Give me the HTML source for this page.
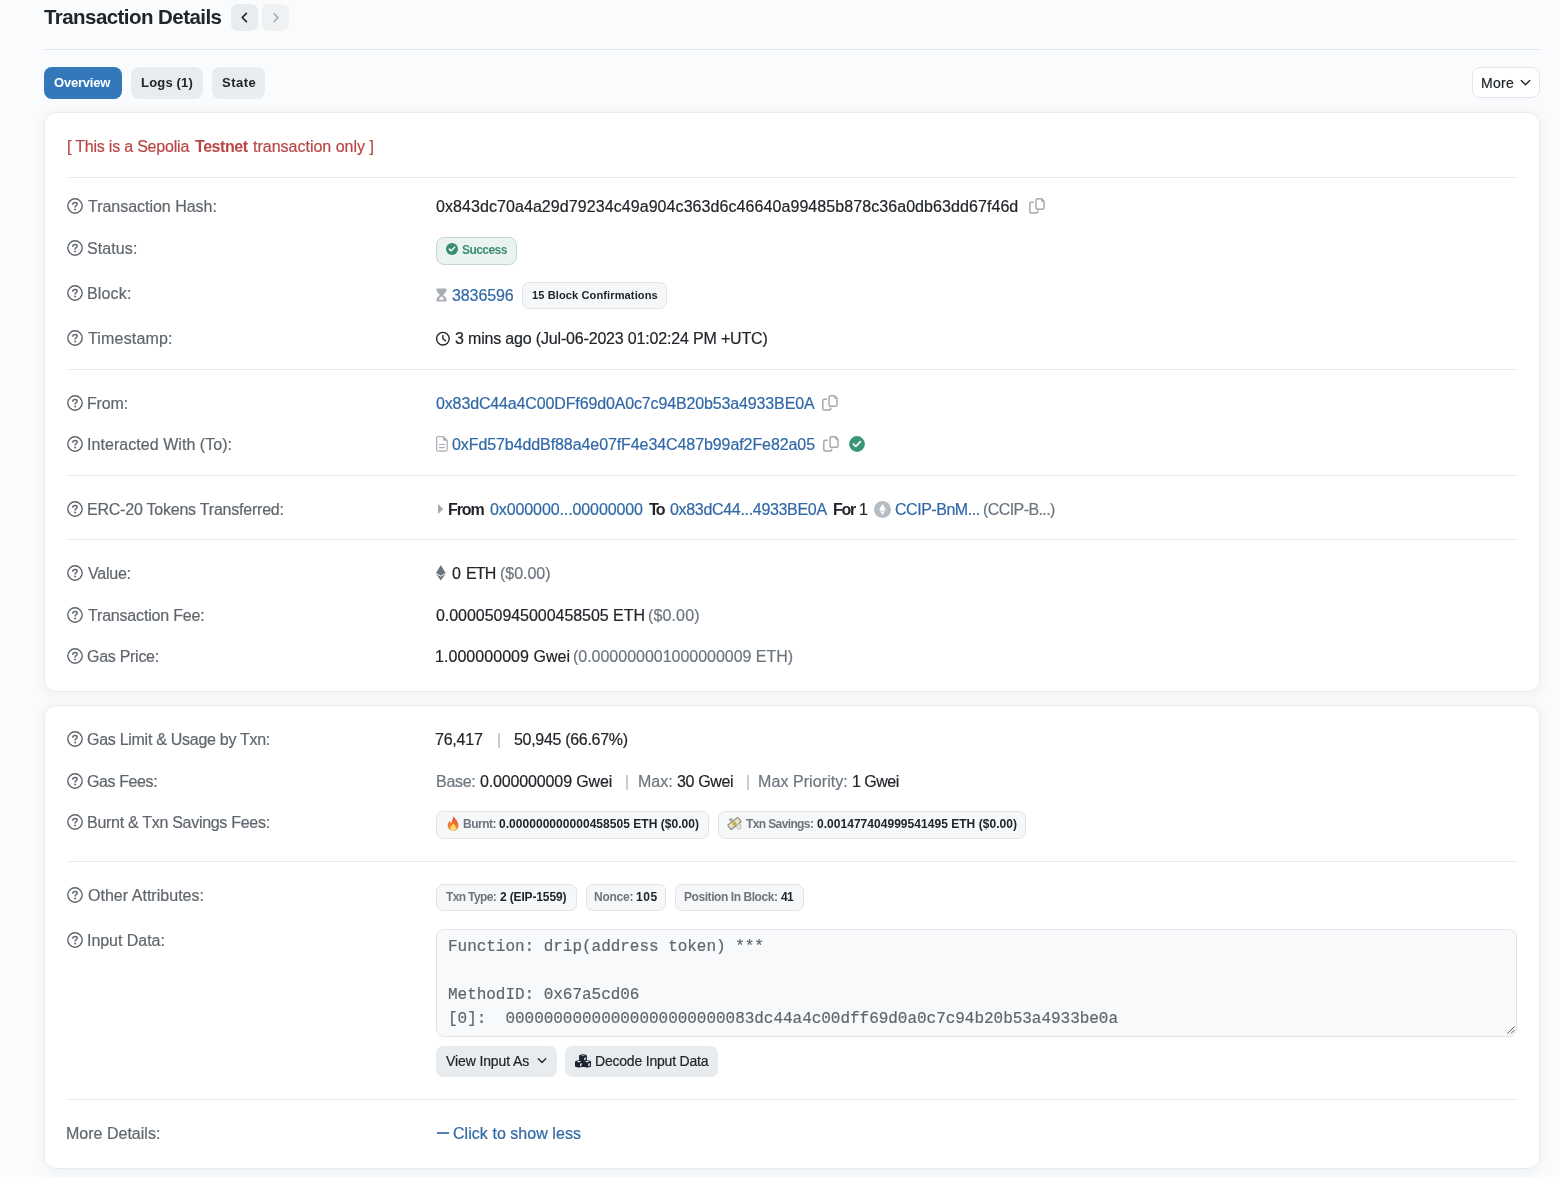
<!DOCTYPE html>
<html>
<head>
<meta charset="utf-8">
<style>
*{box-sizing:border-box;margin:0;padding:0}
html,body{width:1560px;height:1177px;overflow:hidden}
body{background:#fafbfc;font-family:"Liberation Sans",sans-serif;color:#212529;position:relative;font-size:16px}
.abs{position:absolute}
.lt,.val,.bt,.tabt,.title,#warn,#more,#ta,#btn_view,#btn_dec,#v_success,#v_conf{will-change:transform}
.lt,.val,#warn,#warn3,#more,#btn_view,#btn_dec,#ta{-webkit-text-stroke:0.2px currentColor}
b{-webkit-text-stroke:0}
.title{left:44px;top:3px;font-size:20.5px;font-weight:bold;line-height:28px;color:#212529;white-space:nowrap}
.navbtn{top:4px;width:27px;height:27px;border-radius:7px;background:#e9ecef}
.hsep{left:44px;top:49px;width:1496px;height:1px;background:#e4e7eb}
.tab{top:67px;height:32px;border-radius:8px;background:#e9ecef}
.tab.active{background:#3278bb}
.tabt{top:67px;font-size:13px;font-weight:bold;line-height:32px;color:#212529;white-space:nowrap}
.more{left:1472px;top:67px;width:68px;height:31px;border:1px solid #e2e5e9;border-radius:8px;background:#fff}
.card{left:44px;width:1495px;background:#fff;border:1px solid #e9ecef;border-radius:12px;box-shadow:0 2px 14px rgba(30,40,70,.055)}
.sep{left:67px;width:1451px;height:1px;background:#e9ecef}
.qi{left:67px}
.lt{left:87px;height:24px;line-height:24px;color:#5f666d;white-space:nowrap}
.val{left:436px;height:24px;line-height:24px;color:#212529;white-space:nowrap}
.link{color:#3068a6}
.muted{color:#6c757d}
.gbadge{background:#f6f7f8;border:1px solid #e2e4e7;border-radius:7px}
.bt{font-size:12px;font-weight:bold;white-space:nowrap;color:#212529}
.pipe{color:#b8bec4}
.bt.muted{color:#6c757d}
.warn{top:135px;line-height:24px;color:#b94544;white-space:nowrap;will-change:transform}
#title{letter-spacing:-0.556px;margin-left:0.00px}
#tab_logs{letter-spacing:0.186px;margin-left:-0.30px}
#tab_state{letter-spacing:0.500px;margin-left:-0.50px}
#more{letter-spacing:0.267px;margin-left:0.20px}
#l_hash{letter-spacing:-0.025px;margin-left:1.20px}
#l_status{letter-spacing:0.100px;margin-left:0.20px}
#l_block{letter-spacing:0.160px;margin-left:0.20px}
#l_ts{letter-spacing:0.167px;margin-left:1.20px}
#l_from{letter-spacing:-0.150px;margin-left:0.20px}
#l_to{letter-spacing:0.050px;margin-left:0.20px}
#l_erc{letter-spacing:-0.220px;margin-left:0.20px}
#l_value{letter-spacing:-0.240px;margin-left:1.20px}
#l_fee{letter-spacing:-0.187px;margin-left:1.20px}
#l_gp{letter-spacing:-0.278px;margin-left:0.20px}
#l_gl{letter-spacing:-0.279px;margin-left:0.20px}
#l_gf{letter-spacing:-0.400px;margin-left:0.20px}
#l_burnt{letter-spacing:-0.288px;margin-left:0.20px}
#l_other{letter-spacing:0.025px;margin-left:1.20px}
#l_input{letter-spacing:-0.040px;margin-left:0.20px}
#l_more{letter-spacing:0.008px;margin-left:-0.60px}
#v_hash{letter-spacing:0.074px;margin-left:0.00px}
#v_success{letter-spacing:-0.567px;margin-left:0.20px}
#v_block{letter-spacing:-0.100px;margin-left:0.60px}
#v_conf{letter-spacing:0.086px;margin-left:-1.00px}
#v_ts{letter-spacing:-0.173px;margin-left:1.00px}
#v_from{letter-spacing:-0.139px;margin-left:0.00px}
#v_to{letter-spacing:-0.085px;margin-left:0.40px}
#e_from{letter-spacing:-1.067px;margin-left:-0.30px}
#e_a1{letter-spacing:-0.100px;margin-left:0.50px}
#e_to{letter-spacing:-1.800px;margin-left:0.50px}
#e_a2{letter-spacing:-0.317px;margin-left:0.00px}
#e_for{letter-spacing:-1.325px;margin-left:-0.40px}
#e_tok{letter-spacing:-0.470px;margin-left:-1.00px}
#e_sym{letter-spacing:-0.580px;margin-left:-0.50px}
#v_val{letter-spacing:-0.850px;margin-left:-0.10px}
#v_val2{letter-spacing:-0.033px;margin-left:0.20px}
#v_fee{letter-spacing:-0.043px;margin-left:0.00px}
#v_fee2{letter-spacing:0.133px;margin-left:-1.20px}
#v_gp{letter-spacing:0.053px;margin-left:-1.00px}
#v_gp2{letter-spacing:-0.020px;margin-left:0.20px}
#v_gl1{letter-spacing:-0.220px;margin-left:-0.70px}
#v_gl2{letter-spacing:-0.307px;margin-left:-0.50px}
#ta{letter-spacing:-0.030px;margin-left:-0.20px}
#btn_view{letter-spacing:-0.117px;margin-left:0.00px}
#btn_dec{letter-spacing:-0.206px;margin-left:-0.40px}
#v_less{letter-spacing:0.047px;margin-left:-0.60px}
#e_one{letter-spacing:0.000px;margin-left:-1.60px}
#tab_ov{letter-spacing:-0.214px;margin-left:0.30px}
#v_val0{letter-spacing:0.000px;margin-left:-0.58px}
#b_burnt_k{letter-spacing:-0.480px;margin-left:-0.60px}
#b_burnt{letter-spacing:0.039px;margin-left:0.40px}
#b_save_k{letter-spacing:-0.618px;margin-left:0.00px}
#b_save{letter-spacing:0.035px;margin-left:0.80px}
#b_type_k{letter-spacing:-0.638px;margin-left:0.20px}
#b_type{letter-spacing:-0.145px;margin-left:0.40px}
#b_nonce_k{letter-spacing:-0.240px;margin-left:-0.80px}
#b_nonce{letter-spacing:0.600px;margin-left:-1.00px}
#b_pos_k{letter-spacing:-0.435px;margin-left:-0.90px}
#b_pos{letter-spacing:-0.700px;margin-left:-0.40px}
#v_gf1k{letter-spacing:-0.275px;margin-left:-0.10px}
#v_gf1{letter-spacing:-0.140px;margin-left:0.00px}
#v_gf2k{letter-spacing:-0.033px;margin-left:-0.50px}
#v_gf2{letter-spacing:-0.367px;margin-left:0.30px}
#v_gf3k{letter-spacing:0.075px;margin-left:-0.60px}
#v_gf3{letter-spacing:-0.500px;margin-left:-1.00px}
#warn{letter-spacing:-0.206px;margin-left:-0.50px}
#warn2{letter-spacing:-0.433px;margin-left:-0.40px}
#warn3{letter-spacing:0.000px;margin-left:0.90px}
</style>
</head>
<body>
<div class="abs title" id="title">Transaction Details</div>
<div class="abs navbtn" style="left:231px"></div>
<div class="abs navbtn" style="left:262px;background:#eff1f3"></div>
<svg class="abs" style="left:239px;top:12px" width="10" height="12" viewBox="0 0 10 12"><path d="M7.4 1.3L3.2 5.5L7.4 9.7" fill="none" stroke="#212529" stroke-width="1.7" stroke-linecap="round" stroke-linejoin="round"/></svg>
<svg class="abs" style="left:271px;top:12px" width="10" height="12" viewBox="0 0 10 12"><path d="M3 1.8L7 5.8L3 9.8" fill="none" stroke="#9aa0a6" stroke-width="1.3" stroke-linecap="round" stroke-linejoin="round"/></svg>
<div class="abs hsep"></div>
<div class="abs tab active" style="left:44px;width:78px"></div>
<div class="abs tab" style="left:131px;width:72px"></div>
<div class="abs tab" style="left:212px;width:53px"></div>
<div class="abs tabt" id="tab_ov" style="left:54px;color:#fff">Overview</div>
<div class="abs tabt" id="tab_logs" style="left:141px">Logs (1)</div>
<div class="abs tabt" id="tab_state" style="left:222px">State</div>
<div class="abs more"></div>
<div class="abs" id="more" style="left:1481px;top:68px;line-height:31px;font-size:14px">More</div>
<svg class="abs" style="left:1520px;top:79px" width="11" height="8" viewBox="0 0 11 8"><path d="M1.3 1.5L5.5 5.7L9.7 1.5" fill="none" stroke="#212529" stroke-width="1.4" stroke-linecap="round" stroke-linejoin="round"/></svg>
<div class="abs card" style="top:112px;height:580px;width:1496px"></div>
<div class="abs card" style="top:705px;height:464px;width:1496px"></div>
<div class="abs warn" id="warn" style="left:67px">[ This is a Sepolia</div>
<div class="abs warn" id="warn2" style="left:195px;font-weight:bold">Testnet</div>
<div class="abs warn" id="warn3" style="left:252px">transaction only ]</div>
<div class="abs sep" style="top:177px"></div>
<div class="abs sep" style="top:369px"></div>
<div class="abs sep" style="top:475px"></div>
<div class="abs sep" style="top:539px"></div>
<div class="abs sep" style="top:861px"></div>
<div class="abs sep" style="top:1099px"></div>
<svg class="abs qi" style="top:198px" width="16" height="16" viewBox="0 0 16 16"><circle cx="8" cy="8" r="7.2" fill="none" stroke="#5f666d" stroke-width="1.4"/><path d="M5.8 6.3C5.8 5.1 6.8 4.5 8 4.5C9.2 4.5 10.2 5.2 10.2 6.2C10.2 7.6 8.1 7.7 8.1 9.1" fill="none" stroke="#5f666d" stroke-width="1.4" stroke-linecap="round"/><circle cx="8.1" cy="11.5" r="0.95" fill="#5f666d"/></svg>
<div class="abs lt" id="l_hash" style="top:195px">Transaction Hash:</div>
<svg class="abs qi" style="top:240px" width="16" height="16" viewBox="0 0 16 16"><circle cx="8" cy="8" r="7.2" fill="none" stroke="#5f666d" stroke-width="1.4"/><path d="M5.8 6.3C5.8 5.1 6.8 4.5 8 4.5C9.2 4.5 10.2 5.2 10.2 6.2C10.2 7.6 8.1 7.7 8.1 9.1" fill="none" stroke="#5f666d" stroke-width="1.4" stroke-linecap="round"/><circle cx="8.1" cy="11.5" r="0.95" fill="#5f666d"/></svg>
<div class="abs lt" id="l_status" style="top:237px">Status:</div>
<svg class="abs qi" style="top:285px" width="16" height="16" viewBox="0 0 16 16"><circle cx="8" cy="8" r="7.2" fill="none" stroke="#5f666d" stroke-width="1.4"/><path d="M5.8 6.3C5.8 5.1 6.8 4.5 8 4.5C9.2 4.5 10.2 5.2 10.2 6.2C10.2 7.6 8.1 7.7 8.1 9.1" fill="none" stroke="#5f666d" stroke-width="1.4" stroke-linecap="round"/><circle cx="8.1" cy="11.5" r="0.95" fill="#5f666d"/></svg>
<div class="abs lt" id="l_block" style="top:282px">Block:</div>
<svg class="abs qi" style="top:330px" width="16" height="16" viewBox="0 0 16 16"><circle cx="8" cy="8" r="7.2" fill="none" stroke="#5f666d" stroke-width="1.4"/><path d="M5.8 6.3C5.8 5.1 6.8 4.5 8 4.5C9.2 4.5 10.2 5.2 10.2 6.2C10.2 7.6 8.1 7.7 8.1 9.1" fill="none" stroke="#5f666d" stroke-width="1.4" stroke-linecap="round"/><circle cx="8.1" cy="11.5" r="0.95" fill="#5f666d"/></svg>
<div class="abs lt" id="l_ts" style="top:327px">Timestamp:</div>
<svg class="abs qi" style="top:395px" width="16" height="16" viewBox="0 0 16 16"><circle cx="8" cy="8" r="7.2" fill="none" stroke="#5f666d" stroke-width="1.4"/><path d="M5.8 6.3C5.8 5.1 6.8 4.5 8 4.5C9.2 4.5 10.2 5.2 10.2 6.2C10.2 7.6 8.1 7.7 8.1 9.1" fill="none" stroke="#5f666d" stroke-width="1.4" stroke-linecap="round"/><circle cx="8.1" cy="11.5" r="0.95" fill="#5f666d"/></svg>
<div class="abs lt" id="l_from" style="top:392px">From:</div>
<svg class="abs qi" style="top:436px" width="16" height="16" viewBox="0 0 16 16"><circle cx="8" cy="8" r="7.2" fill="none" stroke="#5f666d" stroke-width="1.4"/><path d="M5.8 6.3C5.8 5.1 6.8 4.5 8 4.5C9.2 4.5 10.2 5.2 10.2 6.2C10.2 7.6 8.1 7.7 8.1 9.1" fill="none" stroke="#5f666d" stroke-width="1.4" stroke-linecap="round"/><circle cx="8.1" cy="11.5" r="0.95" fill="#5f666d"/></svg>
<div class="abs lt" id="l_to" style="top:433px">Interacted With (To):</div>
<svg class="abs qi" style="top:501px" width="16" height="16" viewBox="0 0 16 16"><circle cx="8" cy="8" r="7.2" fill="none" stroke="#5f666d" stroke-width="1.4"/><path d="M5.8 6.3C5.8 5.1 6.8 4.5 8 4.5C9.2 4.5 10.2 5.2 10.2 6.2C10.2 7.6 8.1 7.7 8.1 9.1" fill="none" stroke="#5f666d" stroke-width="1.4" stroke-linecap="round"/><circle cx="8.1" cy="11.5" r="0.95" fill="#5f666d"/></svg>
<div class="abs lt" id="l_erc" style="top:498px">ERC-20 Tokens Transferred:</div>
<svg class="abs qi" style="top:565px" width="16" height="16" viewBox="0 0 16 16"><circle cx="8" cy="8" r="7.2" fill="none" stroke="#5f666d" stroke-width="1.4"/><path d="M5.8 6.3C5.8 5.1 6.8 4.5 8 4.5C9.2 4.5 10.2 5.2 10.2 6.2C10.2 7.6 8.1 7.7 8.1 9.1" fill="none" stroke="#5f666d" stroke-width="1.4" stroke-linecap="round"/><circle cx="8.1" cy="11.5" r="0.95" fill="#5f666d"/></svg>
<div class="abs lt" id="l_value" style="top:562px">Value:</div>
<svg class="abs qi" style="top:607px" width="16" height="16" viewBox="0 0 16 16"><circle cx="8" cy="8" r="7.2" fill="none" stroke="#5f666d" stroke-width="1.4"/><path d="M5.8 6.3C5.8 5.1 6.8 4.5 8 4.5C9.2 4.5 10.2 5.2 10.2 6.2C10.2 7.6 8.1 7.7 8.1 9.1" fill="none" stroke="#5f666d" stroke-width="1.4" stroke-linecap="round"/><circle cx="8.1" cy="11.5" r="0.95" fill="#5f666d"/></svg>
<div class="abs lt" id="l_fee" style="top:604px">Transaction Fee:</div>
<svg class="abs qi" style="top:648px" width="16" height="16" viewBox="0 0 16 16"><circle cx="8" cy="8" r="7.2" fill="none" stroke="#5f666d" stroke-width="1.4"/><path d="M5.8 6.3C5.8 5.1 6.8 4.5 8 4.5C9.2 4.5 10.2 5.2 10.2 6.2C10.2 7.6 8.1 7.7 8.1 9.1" fill="none" stroke="#5f666d" stroke-width="1.4" stroke-linecap="round"/><circle cx="8.1" cy="11.5" r="0.95" fill="#5f666d"/></svg>
<div class="abs lt" id="l_gp" style="top:645px">Gas Price:</div>
<svg class="abs qi" style="top:731px" width="16" height="16" viewBox="0 0 16 16"><circle cx="8" cy="8" r="7.2" fill="none" stroke="#5f666d" stroke-width="1.4"/><path d="M5.8 6.3C5.8 5.1 6.8 4.5 8 4.5C9.2 4.5 10.2 5.2 10.2 6.2C10.2 7.6 8.1 7.7 8.1 9.1" fill="none" stroke="#5f666d" stroke-width="1.4" stroke-linecap="round"/><circle cx="8.1" cy="11.5" r="0.95" fill="#5f666d"/></svg>
<div class="abs lt" id="l_gl" style="top:728px">Gas Limit &amp; Usage by Txn:</div>
<svg class="abs qi" style="top:773px" width="16" height="16" viewBox="0 0 16 16"><circle cx="8" cy="8" r="7.2" fill="none" stroke="#5f666d" stroke-width="1.4"/><path d="M5.8 6.3C5.8 5.1 6.8 4.5 8 4.5C9.2 4.5 10.2 5.2 10.2 6.2C10.2 7.6 8.1 7.7 8.1 9.1" fill="none" stroke="#5f666d" stroke-width="1.4" stroke-linecap="round"/><circle cx="8.1" cy="11.5" r="0.95" fill="#5f666d"/></svg>
<div class="abs lt" id="l_gf" style="top:770px">Gas Fees:</div>
<svg class="abs qi" style="top:814px" width="16" height="16" viewBox="0 0 16 16"><circle cx="8" cy="8" r="7.2" fill="none" stroke="#5f666d" stroke-width="1.4"/><path d="M5.8 6.3C5.8 5.1 6.8 4.5 8 4.5C9.2 4.5 10.2 5.2 10.2 6.2C10.2 7.6 8.1 7.7 8.1 9.1" fill="none" stroke="#5f666d" stroke-width="1.4" stroke-linecap="round"/><circle cx="8.1" cy="11.5" r="0.95" fill="#5f666d"/></svg>
<div class="abs lt" id="l_burnt" style="top:811px">Burnt &amp; Txn Savings Fees:</div>
<svg class="abs qi" style="top:887px" width="16" height="16" viewBox="0 0 16 16"><circle cx="8" cy="8" r="7.2" fill="none" stroke="#5f666d" stroke-width="1.4"/><path d="M5.8 6.3C5.8 5.1 6.8 4.5 8 4.5C9.2 4.5 10.2 5.2 10.2 6.2C10.2 7.6 8.1 7.7 8.1 9.1" fill="none" stroke="#5f666d" stroke-width="1.4" stroke-linecap="round"/><circle cx="8.1" cy="11.5" r="0.95" fill="#5f666d"/></svg>
<div class="abs lt" id="l_other" style="top:884px">Other Attributes:</div>
<svg class="abs qi" style="top:932px" width="16" height="16" viewBox="0 0 16 16"><circle cx="8" cy="8" r="7.2" fill="none" stroke="#5f666d" stroke-width="1.4"/><path d="M5.8 6.3C5.8 5.1 6.8 4.5 8 4.5C9.2 4.5 10.2 5.2 10.2 6.2C10.2 7.6 8.1 7.7 8.1 9.1" fill="none" stroke="#5f666d" stroke-width="1.4" stroke-linecap="round"/><circle cx="8.1" cy="11.5" r="0.95" fill="#5f666d"/></svg>
<div class="abs lt" id="l_input" style="top:929px">Input Data:</div>
<div class="abs lt" id="l_more" style="top:1122px;left:67px">More Details:</div>
<div class="abs val" id="v_hash" style="top:195px">0x843dc70a4a29d79234c49a904c363d6c46640a99485b878c36a0db63dd67f46d</div>
<svg class="abs" style="left:1029px;top:198px" width="16" height="16" viewBox="0 0 16 16"><path d="M4.9 4.3H2.3Q0.8 4.3 0.8 5.8V13.5Q0.8 15 2.3 15H7.3Q8.8 15 8.8 13.5V12.4" fill="none" stroke="#a3a8ae" stroke-width="1.45"/><path d="M8.5 0.8H12.5L15 3.3V9.7Q15 11.2 13.5 11.2H8.5Q7 11.2 7 9.7V2.3Q7 0.8 8.5 0.8Z" fill="none" stroke="#a3a8ae" stroke-width="1.45" stroke-linejoin="round"/><path d="M12.1 0.8L15 3.7H13.1Q12.1 3.7 12.1 2.7Z" fill="#a3a8ae"/></svg>
<div class="abs" style="left:436px;top:237px;width:81px;height:28px;border:1px solid #c5d6d0;background:#ebf3f0;border-radius:8px"></div>
<svg class="abs" style="left:446px;top:243px" width="12" height="12" viewBox="0 0 12 12"><circle cx="6" cy="6" r="6" fill="#3a8d6e"/><path d="M3.3 6.1L5.1 7.8L8.7 4.3" fill="none" stroke="#fff" stroke-width="1.5" stroke-linecap="round" stroke-linejoin="round"/></svg>
<div class="abs" id="v_success" style="left:462px;top:236px;line-height:28px;font-size:12px;font-weight:bold;color:#3a8d6e">Success</div>
<svg class="abs" style="left:436px;top:288px" width="11" height="14" viewBox="0 0 11 14"><path d="M0.5 0.5H10.5V2.2Q10.5 4.3 7.2 7Q10.5 9.7 10.5 11.8V13.5H0.5V11.8Q0.5 9.7 3.8 7Q0.5 4.3 0.5 2.2Z" fill="#a9aeb4"/><path d="M3 11.8Q3 10 5.5 8.2Q8 10 8 11.8Z" fill="#fff"/><path d="M2.2 2.2H8.8Q8.3 3.6 5.5 5.8Q2.7 3.6 2.2 2.2Z" fill="#a9aeb4"/></svg>
<div class="abs val link" id="v_block" style="top:284px;left:451px">3836596</div>
<div class="abs gbadge" style="left:522px;top:282px;width:145px;height:27px"></div>
<div class="abs bt" id="v_conf" style="left:533px;top:282px;line-height:27px;font-size:11.1px">15 Block Confirmations</div>
<svg class="abs" style="left:435px;top:331px" width="16" height="16" viewBox="0 0 16 16"><circle cx="7.9" cy="7.7" r="6.3" fill="none" stroke="#212529" stroke-width="1.35"/><path d="M7.9 4.4V7.8L10.6 9.8" fill="none" stroke="#212529" stroke-width="1.35" stroke-linecap="round" stroke-linejoin="round"/></svg>
<div class="abs val" id="v_ts" style="top:327px;left:454px">3 mins ago (Jul-06-2023 01:02:24 PM +UTC)</div>
<div class="abs val link" id="v_from" style="top:392px">0x83dC44a4C00DFf69d0A0c7c94B20b53a4933BE0A</div>
<svg class="abs" style="left:822px;top:395px" width="16" height="16" viewBox="0 0 16 16"><path d="M4.9 4.3H2.3Q0.8 4.3 0.8 5.8V13.5Q0.8 15 2.3 15H7.3Q8.8 15 8.8 13.5V12.4" fill="none" stroke="#a3a8ae" stroke-width="1.45"/><path d="M8.5 0.8H12.5L15 3.3V9.7Q15 11.2 13.5 11.2H8.5Q7 11.2 7 9.7V2.3Q7 0.8 8.5 0.8Z" fill="none" stroke="#a3a8ae" stroke-width="1.45" stroke-linejoin="round"/><path d="M12.1 0.8L15 3.7H13.1Q12.1 3.7 12.1 2.7Z" fill="#a3a8ae"/></svg>
<svg class="abs" style="left:436px;top:436px" width="12" height="16" viewBox="0 0 12 16"><path d="M2.2 0.6H7.3L11.2 4.5V13.6Q11.2 15.2 9.6 15.2H2.2Q0.6 15.2 0.6 13.6V2.2Q0.6 0.6 2.2 0.6Z" fill="none" stroke="#a9aeb4" stroke-width="1.2"/><path d="M7 0.6L11.2 4.8H8.2Q7 4.8 7 3.6Z" fill="#a9aeb4"/><path d="M3.3 8.5H8.6M3.3 11.6H8.6" stroke="#a9aeb4" stroke-width="1.2" stroke-linecap="round"/></svg>
<div class="abs val link" id="v_to" style="top:433px;left:452px">0xFd57b4ddBf88a4e07fF4e34C487b99af2Fe82a05</div>
<svg class="abs" style="left:823px;top:436px" width="16" height="16" viewBox="0 0 16 16"><path d="M4.9 4.3H2.3Q0.8 4.3 0.8 5.8V13.5Q0.8 15 2.3 15H7.3Q8.8 15 8.8 13.5V12.4" fill="none" stroke="#a3a8ae" stroke-width="1.45"/><path d="M8.5 0.8H12.5L15 3.3V9.7Q15 11.2 13.5 11.2H8.5Q7 11.2 7 9.7V2.3Q7 0.8 8.5 0.8Z" fill="none" stroke="#a3a8ae" stroke-width="1.45" stroke-linejoin="round"/><path d="M12.1 0.8L15 3.7H13.1Q12.1 3.7 12.1 2.7Z" fill="#a3a8ae"/></svg>
<svg class="abs" style="left:849px;top:436px" width="16" height="16" viewBox="0 0 16 16"><circle cx="8" cy="8" r="7.9" fill="#3a9677"/><path d="M4.4 8.1L6.8 10.3L11.4 5.7" fill="none" stroke="#fff" stroke-width="1.7" stroke-linecap="round" stroke-linejoin="round"/></svg>
<svg class="abs" style="left:438px;top:504px" width="6" height="10" viewBox="0 0 6 10"><path d="M0 0L5.2 5L0 10Z" fill="#a3a9b0"/></svg>
<div class="abs val " id="e_from" style="top:498px;left:448px"><b>From</b></div>
<div class="abs val link" id="e_a1" style="top:498px;left:489px">0x000000...00000000</div>
<div class="abs val " id="e_to" style="top:498px;left:648px"><b>To</b></div>
<div class="abs val link" id="e_a2" style="top:498px;left:670px">0x83dC44...4933BE0A</div>
<div class="abs val " id="e_for" style="top:498px;left:833px"><b>For</b></div>
<div class="abs val " id="e_one" style="top:498px;left:861px">1</div>
<div class="abs val link" id="e_tok" style="top:498px;left:896px">CCIP-BnM...</div>
<div class="abs val muted" id="e_sym" style="top:498px;left:983px">(CCIP-B...)</div>
<svg class="abs" style="left:874px;top:501px" width="17" height="17" viewBox="0 0 16 16"><circle cx="8" cy="8" r="8" fill="#b6bcc3"/><path d="M8 2.6L11.1 8L8 9.9L4.9 8Z" fill="#fff"/><path d="M8 10.6L11.1 8.7L8 13.2L4.9 8.7Z" fill="#fff"/></svg>
<svg class="abs" style="left:436px;top:565px" width="10" height="16" viewBox="0 0 10 16"><path d="M4.8 0L9.6 8L4.8 10.8L0 8Z" fill="#6c757d"/><path d="M4.8 11.8L9.6 9L4.8 15.6L0 9Z" fill="#6c757d"/></svg>
<div class="abs val" id="v_val0" style="top:562px;left:453px">0</div>
<div class="abs val" id="v_val" style="top:562px;left:466px">ETH</div>
<div class="abs val muted" id="v_val2" style="top:562px;left:500px">($0.00)</div>
<div class="abs val" id="v_fee" style="top:604px">0.000050945000458505 ETH</div>
<div class="abs val muted" id="v_fee2" style="top:604px;left:649px">($0.00)</div>
<div class="abs val" id="v_gp" style="top:645px">1.000000009 Gwei</div>
<div class="abs val muted" id="v_gp2" style="top:645px;left:573px">(0.000000001000000009 ETH)</div>
<div class="abs val" id="v_gl1" style="top:728px">76,417</div>
<div class="abs val pipe" style="top:728px;left:497px">|</div>
<div class="abs val" id="v_gl2" style="top:728px;left:514px">50,945 (66.67%)</div>
<div class="abs val muted" id="v_gf1k" style="top:770px">Base:</div>
<div class="abs val" id="v_gf1" style="top:770px;left:480px">0.000000009 Gwei</div>
<div class="abs val pipe" style="top:770px;left:625px">|</div>
<div class="abs val muted" id="v_gf2k" style="top:770px;left:638px">Max:</div>
<div class="abs val" id="v_gf2" style="top:770px;left:677px">30 Gwei</div>
<div class="abs val pipe" style="top:770px;left:746px">|</div>
<div class="abs val muted" id="v_gf3k" style="top:770px;left:759px">Max Priority:</div>
<div class="abs val" id="v_gf3" style="top:770px;left:853px">1 Gwei</div>
<div class="abs gbadge" style="left:436px;top:811px;width:273px;height:28px"></div>
<svg class="abs" style="left:447px;top:816px" width="13" height="15" viewBox="0 0 13 15"><defs><linearGradient id="fg" x1="0" y1="0" x2="0" y2="1"><stop offset="0" stop-color="#e9482a"/><stop offset="1" stop-color="#f99a32"/></linearGradient></defs><path d="M6.2 0.3C7.8 2.6 11.3 5.1 11.5 9.4C11.6 12.6 9.1 14.7 6 14.7C2.9 14.7 0.6 12.6 0.7 9.6C0.8 7.4 2 6.1 2.4 4.8C3.3 6 3.6 6.8 3.7 7.6C4.9 5.6 6 3.3 6.2 0.3Z" fill="url(#fg)"/><path d="M6.1 7.6C7 9.1 8.9 10.4 8.9 12.2C8.9 13.7 7.6 14.6 6.1 14.6C4.6 14.6 3.3 13.7 3.4 12.2C3.5 10.6 5.3 9.6 6.1 7.6Z" fill="#ffe07a"/></svg>
<div class="abs bt muted" id="b_burnt_k" style="left:464px;top:810px;line-height:28px">Burnt:</div>
<div class="abs bt" id="b_burnt" style="left:499px;top:810px;line-height:28px">0.000000000000458505 ETH ($0.00)</div>
<div class="abs gbadge" style="left:718px;top:811px;width:308px;height:28px"></div>
<svg class="abs" style="left:727px;top:816px" width="16" height="15" viewBox="0 0 16 15"><path d="M1.5 3.5L4.5 1.8L6.5 4.5L3.5 5.5Z" fill="#a9aa9c"/><g transform="rotate(-38 7.5 7.5)"><rect x="1" y="4.6" width="13" height="5.6" rx="0.6" fill="#e7e4c6" stroke="#7f8276" stroke-width="1"/><circle cx="7.3" cy="7.4" r="1.9" fill="#c2ae45"/></g><ellipse cx="12" cy="10.6" rx="2.2" ry="2.8" fill="#e4e2cf" stroke="#b9b9a8" stroke-width="0.8"/></svg>
<div class="abs bt muted" id="b_save_k" style="left:746px;top:810px;line-height:28px">Txn Savings:</div>
<div class="abs bt" id="b_save" style="left:816px;top:810px;line-height:28px">0.001477404999541495 ETH ($0.00)</div>
<div class="abs gbadge" style="left:436px;top:884px;width:141px;height:27px"></div>
<div class="abs bt muted" id="b_type_k" style="left:446px;top:884px;line-height:27px">Txn Type:</div>
<div class="abs bt" id="b_type" style="left:500px;top:884px;line-height:27px">2 (EIP-1559)</div>
<div class="abs gbadge" style="left:586px;top:884px;width:80px;height:27px"></div>
<div class="abs bt muted" id="b_nonce_k" style="left:595px;top:884px;line-height:27px">Nonce:</div>
<div class="abs bt" id="b_nonce" style="left:637px;top:884px;line-height:27px">105</div>
<div class="abs gbadge" style="left:675px;top:884px;width:129px;height:27px"></div>
<div class="abs bt muted" id="b_pos_k" style="left:685px;top:884px;line-height:27px">Position In Block:</div>
<div class="abs bt" id="b_pos" style="left:781px;top:884px;line-height:27px">41</div>
<div class="abs" style="left:436px;top:929px;width:1081px;height:108px;border:1px solid #e1e4e8;background:#f8f9fa;border-radius:8px"></div>
<div class="abs" id="ta" style="left:448px;top:935px;font-family:'Liberation Mono',monospace;font-size:16px;line-height:24px;color:#5f666d;white-space:pre">Function: drip(address token) ***

MethodID: 0x67a5cd06
[0]:  00000000000000000000000083dc44a4c00dff69d0a0c7c94b20b53a4933be0a</div>
<svg class="abs" style="left:1506px;top:1025px" width="9" height="9" viewBox="0 0 9 9"><path d="M8.5 1.5L1.5 8.5M8.5 5L5 8.5" stroke="#555" stroke-width="1"/></svg>
<div class="abs" style="left:436px;top:1046px;width:121px;height:31px;border-radius:7px;background:#e9ecef"></div>
<div class="abs" id="btn_view" style="left:446px;top:1046px;line-height:31px;font-size:14px;color:#212529;white-space:nowrap">View Input As</div>
<svg class="abs" style="left:537px;top:1057px" width="10" height="8" viewBox="0 0 10 8"><path d="M1.3 1.8L5 5.5L8.7 1.8" fill="none" stroke="#212529" stroke-width="1.3" stroke-linecap="round" stroke-linejoin="round"/></svg>
<div class="abs" style="left:565px;top:1046px;width:153px;height:31px;border-radius:7px;background:#e9ecef"></div>
<svg class="abs" style="left:575px;top:1054px" width="16" height="14" viewBox="0 0 16 14"><path d="M4.1 1.4Q8 -0.8 11.9 1.4V6.4Q8 8.3 4.1 6.4Z" fill="#1b2330"/><path d="M0 7.4Q3.9 5.2 7.8 7.4V12.6Q3.9 14.6 0 12.6Z" fill="#1b2330"/><path d="M8.2 7.4Q12.1 5.2 16 7.4V12.6Q12.1 14.6 8.2 12.6Z" fill="#1b2330"/><rect x="7" y="6.5" width="2" height="6.5" fill="#1b2330"/><ellipse cx="8" cy="1.5" rx="1.7" ry="0.7" fill="#8d949c"/><ellipse cx="3.9" cy="7.6" rx="1.9" ry="0.6" fill="#f4f6f8"/><ellipse cx="12.1" cy="7.6" rx="1.9" ry="0.6" fill="#f4f6f8"/><path d="M9.2 4.1L10.7 3.3V5.4L9.2 6.2Z" fill="#f4f6f8"/><path d="M5.1 9.7L6.6 8.9V11.6L5.1 12.4Z" fill="#f4f6f8"/><path d="M13.3 9.7L14.8 8.9V11.6L13.3 12.4Z" fill="#f4f6f8"/></svg>
<div class="abs" id="btn_dec" style="left:595px;top:1046px;line-height:31px;font-size:14px;color:#212529;white-space:nowrap">Decode Input Data</div>
<div class="abs" style="left:437px;top:1132px;width:12px;height:2px;background:#3068a6;opacity:.85"></div>
<div class="abs val link" id="v_less" style="top:1122px;left:454px">Click to show less</div>
</body>
</html>
